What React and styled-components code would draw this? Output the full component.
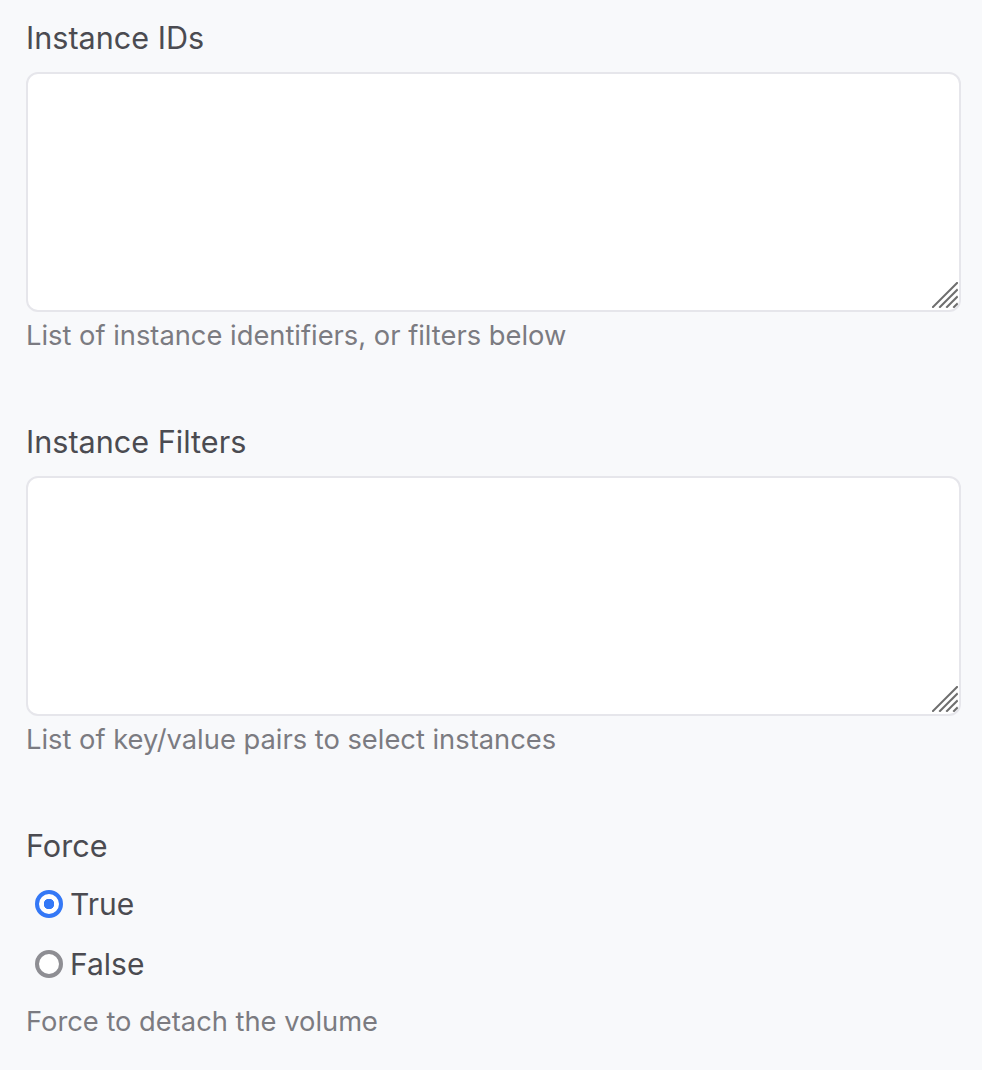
import React, { useState } from 'react';
import styled, { createGlobalStyle } from 'styled-components';

const GlobalStyle = createGlobalStyle`
  html, body {
    margin: 0;
    padding: 0;
    background: #f8f9fb;
  }
  body {
    font-family: Inter, "Noto Sans", "Liberation Sans", sans-serif;
    -webkit-font-smoothing: antialiased;
  }
`;

const StyledForm = styled('form')`
  box-sizing: border-box;
  width: 982px;
  min-height: 1070px;
  padding: 20px 21px 0 26px;
  background: #f8f9fb;
  .field {
    margin-bottom: 70px;
  }
  .field.last {
    margin-bottom: 0;
  }
  .label {
    display: block;
    font-size: 30.6px;
    line-height: 36px;
    font-weight: 400;
    color: #4b4b51;
    margin-bottom: 16px;
  }
  .field.radios .label {
    margin-bottom: 18px;
  }
  .help {
    font-size: 27.3px;
    line-height: 36px;
    color: #7b7b81;
    margin-top: 6px;
  }
  .field.radios .help {
    margin-top: 18px;
  }
`;

const AreaWrap = styled('div')`
  position: relative;
  height: 240px;
  textarea {
    box-sizing: border-box;
    display: block;
    width: 100%;
    height: 100%;
    margin: 0;
    padding: 14px 18px;
    border: 2px solid #e6e6eb;
    border-radius: 12px;
    background: #ffffff;
    font-family: inherit;
    font-size: 28px;
    color: #4b4b51;
    resize: none;
    outline: none;
  }
  .grip {
    position: absolute;
    right: 3px;
    bottom: 4px;
    width: 26px;
    height: 26px;
    pointer-events: none;
  }
`;

const RadioList = styled('div')`
  display: flex;
  flex-direction: column;
  gap: 16px;
  padding-left: 9px;
`;

const RadioRow = styled('label')`
  display: flex;
  align-items: center;
  height: 44px;
  gap: 7px;
  font-size: 30px;
  color: #4b4b51;
  cursor: pointer;
  input {
    appearance: none;
    box-sizing: border-box;
    margin: 0;
    width: 28px;
    height: 28px;
    border-radius: 50%;
    border: 4px solid ${(p) => (p.$checked ? '#3478f6' : '#8e8e93')};
    background: ${(p) =>
      p.$checked
        ? 'radial-gradient(circle, #3478f6 0 5px, #ffffff 5.5px)'
        : '#ffffff'};
  }
`;

const Grip = () => (
  <svg className="grip" viewBox="0 0 26 26">
    <g stroke="#6e6e6e" strokeWidth="2" strokeLinecap="square">
      <line x1="1" y1="25" x2="25" y2="1" />
      <line x1="8" y1="25" x2="25" y2="8" />
      <line x1="15" y1="25" x2="25" y2="15" />
      <line x1="22" y1="25" x2="25" y2="22" />
    </g>
  </svg>
);

const AreaField = ({ label, help }) => (
  <div className="field">
    <span className="label">{label}</span>
    <AreaWrap>
      <textarea />
      <Grip />
    </AreaWrap>
    <div className="help">{help}</div>
  </div>
);

const App = () => {
  const [force, setForce] = useState('true');
  return (
    <>
      <GlobalStyle />
      <StyledForm onSubmit={(e) => e.preventDefault()}>
        <AreaField
          label="Instance IDs"
          help="List of instance identifiers, or filters below"
        />
        <AreaField
          label="Instance Filters"
          help="List of key/value pairs to select instances"
        />
        <div className="field radios last">
          <span className="label">Force</span>
          <RadioList>
            {['true', 'false'].map((v) => (
              <RadioRow key={v} $checked={force === v}>
                <input
                  type="radio"
                  name="force"
                  value={v}
                  checked={force === v}
                  onChange={() => setForce(v)}
                />
                {v === 'true' ? 'True' : 'False'}
              </RadioRow>
            ))}
          </RadioList>
          <div className="help">Force to detach the volume</div>
        </div>
      </StyledForm>
    </>
  );
};

export default App;
